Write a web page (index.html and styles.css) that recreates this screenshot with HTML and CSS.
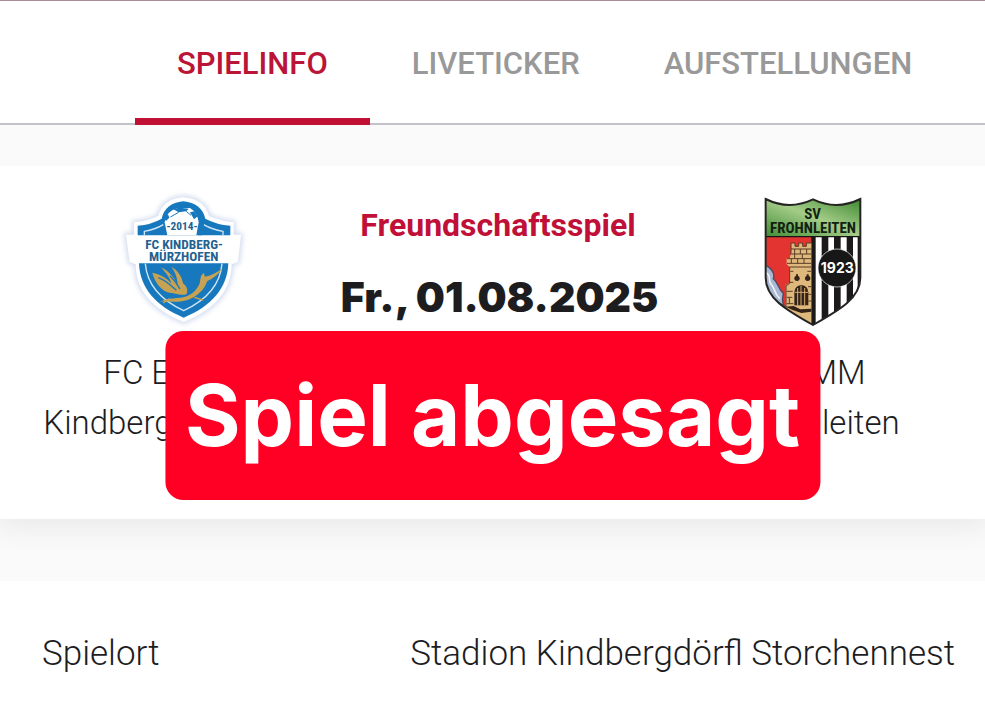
FILE: index.html
```html
<!DOCTYPE html>
<html lang="de">
<head>
    <meta charset="UTF-8">
    <meta name="viewport" content="width=device-width, initial-scale=1.0">
    <title>Spielinfo</title>
    <link rel="stylesheet" href="styles.css">
</head>
<body>
    <nav class="tabs">
        <a class="tab active" href="#spielinfo">SPIELINFO</a>
        <a class="tab" href="#liveticker">LIVETICKER</a>
        <a class="tab" href="#aufstellungen">AUFSTELLUNGEN</a>
    </nav>

    <main id="spielinfo">
        <section class="match">
            <div class="team">
                <svg class="crest crest-home" viewBox="0 0 410 444" role="img" aria-label="FC Kindberg-Mürzhofen">
                    <path class="glow" d="M130 93Q142 42 205 37Q268 42 282 93Q315 108 356 112L356 149H378L369 231L350 238C350 315 300 374 206 411C112 374 62 315 62 238L44 231L33 149H57V112Q100 108 130 93Z"/>
                    <path fill="#fff" d="M130 93Q142 42 205 37Q268 42 282 93Q315 108 356 112L356 149H378L369 231L350 238C350 315 300 374 206 411C112 374 62 315 62 238L44 231L33 149H57V112Q100 108 130 93Z"/>
                    <path fill="#1878bd" d="M140 101Q150 55 205 49Q260 55 271 101Q305 119 346 122V151H68V122Q108 119 140 101Z"/>
                    <path fill="#1878bd" d="M72 235H340C338 307 290 364 206 398C122 364 74 307 72 235Z"/>
                    <path fill="none" stroke="#cfe6f5" stroke-width="4" d="M88 150V139Q120 134 145 119M324 150V139Q292 134 266 119M91 236C96 298 137 345 206 377C275 345 316 298 321 236"/>
                    <path fill="#fff" d="M149 112Q156 76 187 70L225 69Q247 82 251 112L244 151H157Z"/>
                    <path fill="#1878bd" d="M174 72L194 68L221 71L214 79L191 82ZM147 99L159 88L163 98L153 108ZM225 82L238 79L248 94L237 103ZM252 114L268 111L261 151H249L254 136Z"/>
                    <path fill="none" stroke="#1878bd" stroke-width="3" d="M191 82L166 96M214 79L228 91"/>
                    <text class="crest-year" x="201" y="134">-2014-</text>
                    <text class="crest-name" x="207" y="193">FC KINDBERG-</text>
                    <text class="crest-name" x="206" y="228">MÜRZHOFEN</text>
                    <path fill="#c7a252" d="M112 263C139 269 157 280 169 296C166 278 148 258 137 246C162 259 181 278 187 302C190 285 180 259 169 245C189 256 202 277 204 295C215 304 220 314 215 327C198 334 181 324 168 324C139 320 119 292 112 263Z"/>
                    <path fill="none" stroke="#1878bd" stroke-width="4" d="M130 278C153 286 168 302 184 316M165 272Q184 290 195 312"/>
                    <path fill="#c7a252" d="M136 350C161 337 188 343 215 334C237 326 248 309 254 295L258 273L266 263L270 275C290 272 307 262 324 249C311 268 293 281 277 288C267 316 246 334 220 344C191 354 163 349 136 350Z"/>
                    <path fill="none" stroke="#c7a252" stroke-width="4" d="M145 354L164 341M238 337L264 345"/>
                </svg>
                <p class="team-name name-home"><span>FC E</span><span>Kindberg</span></p>
            </div>

            <div class="fixture">
                <h1 class="competition">Freundschaftsspiel</h1>
                <time class="date" datetime="2025-08-01">Fr., 01.08.2025</time>
            </div>

            <div class="team">
                <svg class="crest crest-away" viewBox="0 0 378 444" role="img" aria-label="SV Frohnleiten">
                    <defs>
                        <clipPath id="shield">
                            <path d="M47 42Q117 77 189 43Q260 77 331 42V278C331 339 270 374 189 420C107 374 47 339 47 278Z"/>
                        </clipPath>
                        <linearGradient id="green" x1="0" x2="1" y1="1" y2="0">
                            <stop offset="0" stop-color="#3e8b35"/>
                            <stop offset=".5" stop-color="#a4cc88"/>
                            <stop offset="1" stop-color="#348329"/>
                        </linearGradient>
                    </defs>
                    <g clip-path="url(#shield)">
                        <path fill="url(#green)" d="M40 35H340V155H40Z"/>
                        <path fill="#e33431" d="M40 155H190V430H40Z"/>
                        <path fill="#fff" d="M190 155H340V430H190Z"/>
                        <path fill="#1b1919" d="M184 155H197V430H184ZM215 155H235V430H215ZM252 155H272V430H252ZM290 155H309V430H290ZM323 155H340V430H323Z"/>
                        <path fill="#aab8d3" stroke="#4c4b62" stroke-width="4" d="M40 238C63 246 76 265 70 281C87 295 85 315 100 325C99 338 93 346 102 362L40 330Z"/>
                        <path fill="none" stroke="#eef2f8" stroke-width="5" d="M48 263C66 271 52 286 64 299C76 309 70 325 90 341"/>
                        <path fill="#dfb97c" d="M123 174H135V184H146V174H158V184H169V174H184V420L107 375V301L119 293V246L110 238V220H119L123 205Z"/>
                        <path fill="none" stroke="#5b3c27" stroke-width="3" d="M123 205V174H135V184H146V174H158V184H169V174H184M123 192H184M120 207H184M134 192V207M151 192V207M170 192V207M111 221H184M111 235H184M124 221V235M143 221V235M162 221V235M119 246H184M119 246V295L108 303V374M134 207V221M157 207V221M121 259H130M172 259H183M120 292H130M174 305H184M110 319H128M110 337H127M110 356H130M118 337V356M175 328H184M175 348H184"/>
                        <path fill="#352318" d="M133 322Q134 302 154 300Q174 302 175 322V361H133Z"/>
                        <path fill="none" stroke="#d7ae71" stroke-width="3" d="M134 322H174M143 309V360M153 302V360M164 309V360"/>
                        <circle cx="141" cy="280" r="8" fill="#352318"/>
                        <circle cx="173" cy="280" r="8" fill="#352318"/>
                        <path fill="#352318" d="M138 268H144V280H138ZM170 268H176V280H170ZM107 365L131 363L151 373L184 371V380L154 384L128 375Z"/>
                        <path fill="none" stroke="#171615" stroke-width="4" d="M40 155H340"/>
                    </g>
                    <circle cx="261" cy="249" r="57" fill="#171717" stroke="#fff" stroke-width="2"/>
                    <path fill="none" stroke="#252423" stroke-width="6" d="M47 42Q117 77 189 43Q260 77 331 42V278C331 339 270 374 189 420C107 374 47 339 47 278Z"/>
                    <text class="away-name" x="188" y="102">SV</text>
                    <text class="away-name" x="189" y="145">FROHNLEITEN</text>
                    <text class="away-year" x="262" y="264">1923</text>
                </svg>
                <p class="team-name name-away"><span>MM</span><span>leiten</span></p>
            </div>

            <strong class="cancelled">Spiel abgesagt</strong>
        </section>

        <dl class="details">
            <dt>Spielort</dt>
            <dd>Stadion Kindbergdörfl Storchennest</dd>
        </dl>
    </main>
</body>
</html>
```
FILE: styles.css
```css
* {
    box-sizing: border-box;
}

body {
    margin: 0;
    min-height: 100vh;
    display: flex;
    flex-direction: column;
    background: #fafafa;
    color: #1d1d1f;
    font-family: Roboto, sans-serif;
    font-size: 35px;
    font-weight: 350;
    overflow-x: hidden;
}

.tabs {
    display: flex;
    height: 125px;
    padding-left: 135px;
    background: #fff;
    border-top: 1px solid #ad8d94;
    box-shadow: inset 0 -2px #c3c3c9;
}

.tab {
    padding: 0 42px;
    border-bottom: 7px solid transparent;
    color: #999;
    font-size: 31px;
    font-weight: 500;
    line-height: 126px;
    text-decoration: none;
}

.tab.active {
    color: #ba1436;
    border-bottom-color: #c01033;
}

main {
    flex: 1;
    display: flex;
    flex-direction: column;
    gap: 62px;
    padding-top: 41px;
}

.match {
    position: relative;
    display: grid;
    grid-template-columns: repeat(3, minmax(0, 1fr));
    padding: 19px 15px 71px 26px;
    background: #fff;
    box-shadow: 0 0 30px 6px rgba(0, 0, 0, 0.08);
    clip-path: inset(0 0 -40px);
    text-align: center;
}

.team {
    display: flex;
    flex-direction: column;
    align-items: center;
    gap: 15px;
}

.crest {
    height: 148px;
}

.crest text {
    text-anchor: middle;
    font-weight: 700;
}

.glow {
    fill: #d3dcf0;
    stroke: #d3dcf0;
    stroke-width: 12px;
    filter: blur(8px);
}

.crest-year,
.crest-name {
    fill: #24618f;
    font-family: "Liberation Sans Narrow", "Roboto Condensed", Roboto, sans-serif;
}

.crest-year {
    font-size: 34px;
}

.crest-name {
    font-size: 40px;
}

.away-name {
    fill: #122111;
    font-family: "Liberation Sans Narrow", "Roboto Condensed", Roboto, sans-serif;
    font-size: 45px;
}

.away-year {
    fill: #fff;
    font-family: Inter, sans-serif;
    font-size: 42px;
}

.team-name {
    display: flex;
    flex-direction: column;
    margin: 0;
    font-size: 33px;
    line-height: 50px;
    white-space: nowrap;
}

.name-home {
    width: 280px;
    text-align: left;
}

.name-home span:first-child {
    padding-left: 60px;
}

.name-away {
    width: 174px;
    text-align: right;
}

.name-away span:first-child {
    padding-right: 34px;
}

.fixture {
    padding-top: 16px;
}

.competition {
    margin: 0;
    color: #c01037;
    font-size: 32px;
    font-weight: 700;
    line-height: 48px;
}

.date {
    display: block;
    margin-top: 16px;
    font-family: Inter, sans-serif;
    font-size: 41px;
    font-weight: 900;
    line-height: 64px;
    white-space: nowrap;
}

/* sits over the team names */
.cancelled {
    position: absolute;
    top: 165px;
    left: 50%;
    transform: translateX(-50%);
    padding: 0 20px;
    border-radius: 18px;
    background: #ff0024;
    color: #fff;
    font-family: Inter, sans-serif;
    font-size: 85px;
    font-weight: 700;
    line-height: 169px;
    white-space: nowrap;
}

.details {
    flex: 1;
    display: flex;
    justify-content: space-between;
    margin: 0;
    padding: 48px 30px 48px 42px;
    background: #fff;
    line-height: 50px;
}

.details dd {
    margin: 0;
}
```
